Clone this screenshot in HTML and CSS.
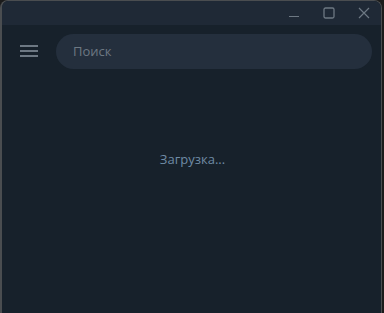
FILE: index.html
```html
<!DOCTYPE html>
<html lang="ru">
<head>
<meta charset="utf-8">
<link rel="stylesheet" href="styles.css">
</head>
<body>
<div class="window">
  <div class="titlebar">
    <div class="ctrl">
      <svg width="12" height="12" viewBox="0 0 12 12"><path d="M1 9.5H11" stroke="#6d7883" stroke-width="1.2" fill="none"/></svg>
    </div>
    <div class="ctrl">
      <svg width="12" height="12" viewBox="0 0 12 12"><rect x="1" y="1" width="10" height="10" rx="1.5" stroke="#6d7883" stroke-width="1.3" fill="none"/></svg>
    </div>
    <div class="ctrl">
      <svg width="12" height="12" viewBox="0 0 12 12"><path d="M1 1L11 11M11 1L1 11" stroke="#6d7883" stroke-width="1.2" fill="none"/></svg>
    </div>
  </div>
  <div class="header">
    <div class="menu">
      <span></span><span></span><span></span>
    </div>
    <div class="search">Поиск</div>
  </div>
  <div class="content">
    <div class="loading">Загрузка...</div>
  </div>
</div>
</body>
</html>
```
FILE: styles.css
```css
html, body {
  margin: 0;
  padding: 0;
  width: 384px;
  height: 313px;
  background: #1b1b1b;
  overflow: hidden;
}
.window {
  box-sizing: border-box;
  width: 382px;
  height: 313px;
  border: 1px solid #4a4d50;
  border-left-width: 2px;
  border-bottom: none;
  border-radius: 8px 8px 0 0;
  background: #17212b;
  display: flex;
  flex-direction: column;
  overflow: hidden;
  font-family: "Open Sans", "Noto Sans", sans-serif;
}
.titlebar {
  height: 24px;
  flex: none;
  background: #1f2936;
  display: flex;
  justify-content: flex-end;
  align-items: center;
}
.ctrl {
  width: 35px;
  height: 24px;
  display: flex;
  align-items: center;
  justify-content: center;
}
.header {
  display: flex;
  align-items: center;
  padding: 8px 9px 0 18px;
  height: 36px;
}
.menu {
  width: 18px;
  display: flex;
  flex-direction: column;
  gap: 3px;
  margin-right: 18px;
}
.menu span {
  display: block;
  height: 2px;
  background: #6d7883;
}
.search {
  flex: 1;
  height: 35px;
  border-radius: 18px;
  background: #242f3d;
  color: #6d7883;
  font-size: 13px;
  display: flex;
  align-items: center;
  padding-left: 17px;
}
.content {
  flex: 1;
  display: flex;
  justify-content: center;
  padding-top: 81px;
}
.loading {
  color: #6f8ba5;
  font-size: 13px;
  padding-left: 2px;
}
```
